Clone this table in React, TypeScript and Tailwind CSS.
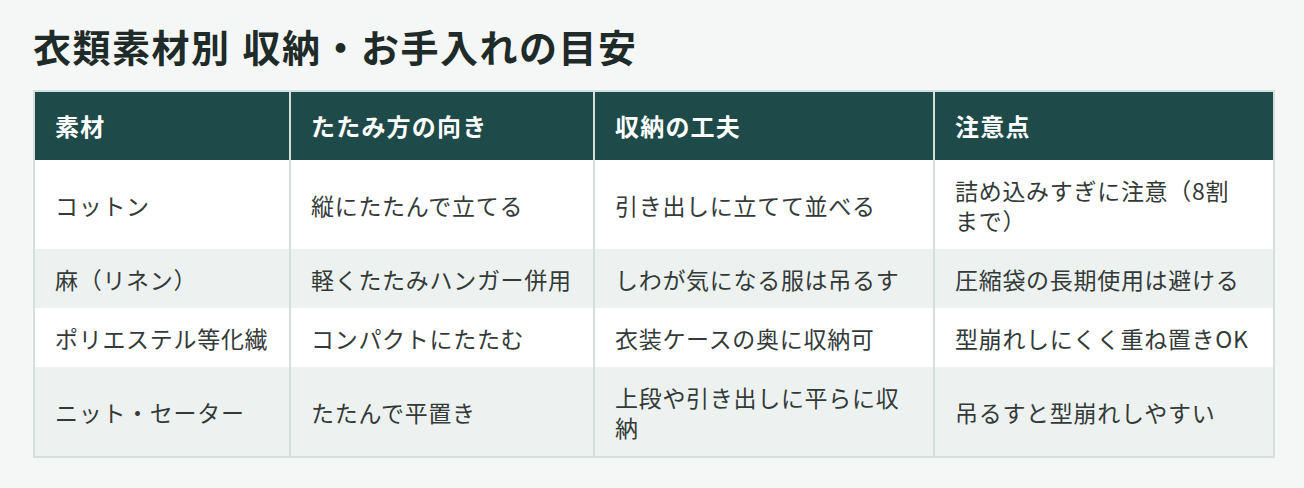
const headers = ['素材', 'たたみ方の向き', '収納の工夫', '注意点'];

const rows = [
    ['コットン', '縦にたたんで立てる', '引き出しに立てて並べる', '詰め込みすぎに注意（8割まで）'],
    ['麻（リネン）', '軽くたたみハンガー併用', 'しわが気になる服は吊るす', '圧縮袋の長期使用は避ける'],
    ['ポリエステル等化繊', 'コンパクトにたたむ', '衣装ケースの奥に収納可', '型崩れしにくく重ね置きOK'],
    ['ニット・セーター', 'たたんで平置き', '上段や引き出しに平らに収納', '吊るすと型崩れしやすい'],
];

const widths = ['w-[256px]', 'w-[304px]', 'w-[340px]', 'w-[340px]'];
const pads = ['pl-5 pr-[18px]', 'pl-5 pr-[18px]', 'pl-5 pr-5', 'pl-5 pr-[24px]'];

export default function App() {
    return (
        <div
            className="min-h-[488px] bg-[#f5f7f6] px-[33px] pt-[23px] pb-8"
            style={{ fontFamily: '"Noto Sans CJK JP", "Noto Sans", sans-serif' }}
        >
            <h1 className="text-[38px] leading-[46px] font-bold text-[#1f2b29] tracking-[1.5px]">
                衣類素材別<span className="inline-block w-[12px]" />収納・お手入れの目安
            </h1>

            <table className="mt-[21px] w-[1240px] table-fixed border-collapse border-2 border-[#d5dfdc] leading-[30px]">
                <thead>
                    <tr className="bg-[#1f4a4a] text-white">
                        {headers.map((h, i) => (
                            <th
                                key={h}
                                className={`${widths[i]} border-x-2 border-[#d5dfdc] px-5 py-[19px] text-left text-[24px] tracking-[1.2px] font-bold align-middle`}
                            >
                                {h}
                            </th>
                        ))}
                    </tr>
                </thead>
                <tbody>
                    {rows.map((r, ri) => (
                        <tr key={r[0]} className={ri % 2 === 0 ? 'bg-white' : 'bg-[#edf2f0]'}>
                            {r.map((c, ci) => (
                                <td
                                    key={ci}
                                    className={`${pads[ci]} border-x-2 border-[#d5dfdc] py-[14.5px] text-[23px] tracking-[0.7px] text-[#333a38] align-middle`}
                                >
                                    {c}
                                </td>
                            ))}
                        </tr>
                    ))}
                </tbody>
            </table>
        </div>
    );
}
